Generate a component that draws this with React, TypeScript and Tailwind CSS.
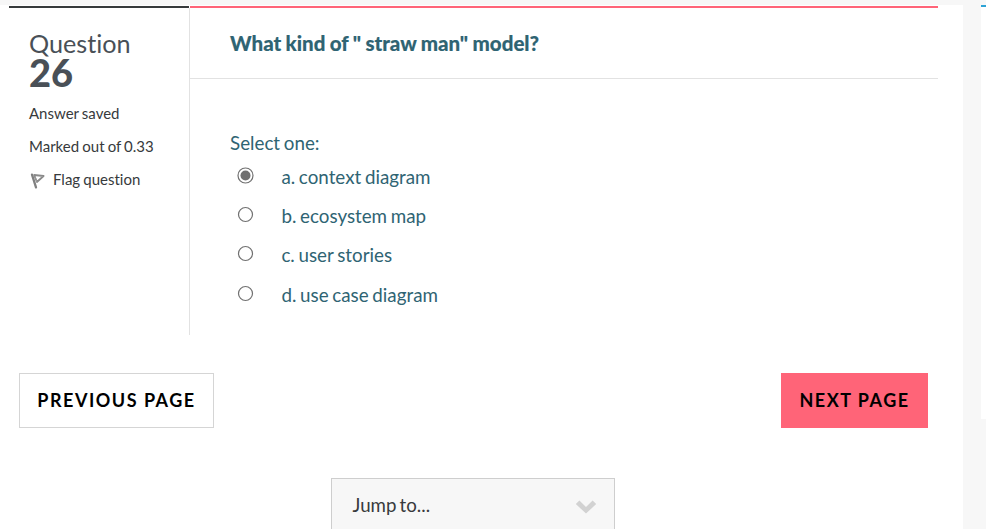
import React from "react";

const options = [
  { label: "a. context diagram", row: "h-[39px]", checked: true },
  { label: "b. ecosystem map", row: "h-[39px]", checked: false },
  { label: "c. user stories", row: "h-[40px]", checked: false },
  { label: "d. use case diagram", row: "h-[39px]", checked: false },
];

function Radio({ checked }: { checked: boolean }) {
  return (
    <svg width="17" height="17" viewBox="0 0 17 17" className="mt-px shrink-0" role="radio" aria-checked={checked}>
      <circle cx="8.5" cy="8.5" r={checked ? 7.5 : 7} fill="white" stroke="#707070" strokeWidth="1.2" />
      {checked && <circle cx="8.5" cy="8.5" r="5" fill="#707070" />}
    </svg>
  );
}

function FlagIcon() {
  return (
    <svg width="16" height="16" viewBox="0 0 16 16" fill="none" className="mt-[5px] ml-px -mr-px shrink-0">
      <path d="M2 1.6L6 14.4" stroke="#808080" strokeWidth="2.3" strokeLinecap="round" />
      <path d="M4.1 2L13.6 3L6.9 9Z" stroke="#8a8a8a" strokeWidth="1.8" strokeLinejoin="round" />
      <path d="M5 3.4L7 9" stroke="#999" strokeWidth="1" />
    </svg>
  );
}

function QuestionInfo() {
  return (
    <aside className="h-[329px] w-[181px] shrink-0">
      <div className="h-0.5 w-[180px] bg-[#373a3c]" />
      <div className="h-[327px] border-r border-[#e2e2e2] pl-5 pt-[21px] text-[15px] text-[#373a3c] [word-spacing:-0.7px]">
        <h3 className="text-[#495057]">
          <span className="block h-[29px] text-[25.2px] leading-[29px]">Question</span>
          <span className="block h-[31px] text-[38px] font-black leading-[28px]">26</span>
        </h3>
        <div className="mt-[13px] h-[33px] leading-[22px]">Answer saved</div>
        <div className="h-[33px] leading-[22px]">Marked out of 0.33</div>
        <div className="flex h-[22px] gap-2 leading-[22px]">
          <FlagIcon />
          <span>Flag question</span>
        </div>
      </div>
    </aside>
  );
}

function QuestionBody() {
  return (
    <section className="w-[748px] text-[18.8px] text-[#2f6473] [word-spacing:-1.1px]">
      <div className="h-0.5 bg-[#ff6478]" />
      <div className="h-[71px] border-b border-[#e2e2e2] pl-10 pt-[21px] text-[20.5px] font-black leading-[28px] [word-spacing:-0.5px] [-webkit-text-stroke:0.15px_#2f6473]">
        What kind of " straw man" model?
      </div>
      <div className="pl-10 pt-[50px]">
        <div className="h-[37px] leading-[28px]">Select one:</div>
        {options.map((o) => (
          <div key={o.label} className={"flex pl-[7px] " + o.row}>
            <Radio checked={o.checked} />
            <span className="ml-[27.4px] -mt-[3px] leading-[28px]">{o.label}</span>
          </div>
        ))}
      </div>
    </section>
  );
}

export default function App() {
  return (
    <div className="flex h-[529px] w-[986px] overflow-hidden bg-[#f7f7f7] pt-[5px] font-[Lato,sans-serif] [font-variant-ligatures:none]">
      <main className="h-[524px] w-[963px] shrink-0 bg-white pl-[9px] pt-px">
        <div className="flex h-[329px]">
          <QuestionInfo />
          <QuestionBody />
        </div>
        <div className="mt-[38px] flex h-[55px] w-[919px] justify-between pl-[10px]">
          <button className="w-[195px] border border-[#d5d5d5] bg-white text-[18px] font-bold tracking-[1.5px] text-black">
            PREVIOUS PAGE
          </button>
          <button className="w-[147px] bg-[#ff6478] text-[18px] font-bold tracking-[1.5px] text-black">
            NEXT PAGE
          </button>
        </div>
        <div className="ml-[322px] mt-[50px] flex h-[55px] w-[284px] justify-between border border-[#cecece] bg-[#f7f7f7] pl-[20.5px] pr-[17px] text-[18.7px] text-[#373a3c] [word-spacing:-1.6px]">
          <span className="mt-[12px] leading-[28px]">Jump to...</span>
          <svg width="22" height="14" viewBox="0 0 22 14" className="mt-[21px]">
            <path d="M.8 4L4.4 .6L11 7L17.6 .6L21.2 4L11 13.6Z" fill="#d2d2d2" />
          </svg>
        </div>
      </main>
      <aside className="ml-[18px] h-[414px] w-[5px] border-t-2 border-[#2ea3d5] bg-white" />
    </div>
  );
}
